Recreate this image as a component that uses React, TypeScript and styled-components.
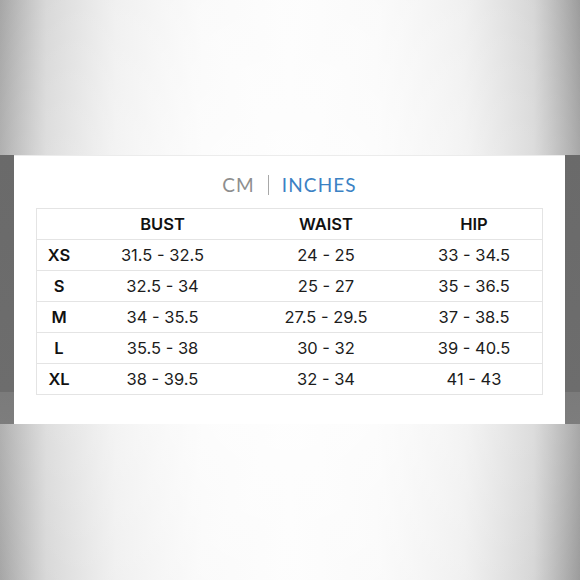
import * as React from "react"
import styled, {createGlobalStyle} from "styled-components";

const sizes = [
  {label: "XS", bust: "31.5 - 32.5", waist: "24 - 25", hip: "33 - 34.5"},
  {label: "S", bust: "32.5 - 34", waist: "25 - 27", hip: "35 - 36.5"},
  {label: "M", bust: "34 - 35.5", waist: "27.5 - 29.5", hip: "37 - 38.5"},
  {label: "L", bust: "35.5 - 38", waist: "30 - 32", hip: "39 - 40.5"},
  {label: "XL", bust: "38 - 39.5", waist: "32 - 34", hip: "41 - 43"},
]

const App = () => {
  return (
    <Page>
      <GlobalStyle/>
      <TopBand/>
      <Middle>
        <SideBar width={14}/>
        <Card>
          <Units>
            <Unit>CM</Unit>
            <Divider/>
            <Unit active>INCHES</Unit>
          </Units>
          <Table>
            <Row>
              <Cell/>
              <HeadCell>BUST</HeadCell>
              <HeadCell>WAIST</HeadCell>
              <HeadCell>HIP</HeadCell>
            </Row>
            {sizes.map(s => (
              <Row key={s.label}>
                <HeadCell>{s.label}</HeadCell>
                <Cell>{s.bust}</Cell>
                <Cell>{s.waist}</Cell>
                <Cell>{s.hip}</Cell>
              </Row>
            ))}
          </Table>
        </Card>
        <SideBar width={15}/>
      </Middle>
      <BottomBand/>
    </Page>
  );
};

const GlobalStyle = createGlobalStyle`
  body {
    margin: 0;
    font-family: Inter, "Liberation Sans", sans-serif;
  }
`

const Page = styled.div`
  width: 580px;
  height: 580px;
  display: flex;
  flex-direction: column;
  background:
    radial-gradient(ellipse 60% 90% at 50% 50%, rgba(255,255,255,0.9) 0%, rgba(255,255,255,0) 100%),
    linear-gradient(to right, #a6a6a6 0%, #d4d4d4 8%, #ececec 20%, #f8f8f8 35%, #fbfbfb 50%, #f8f8f8 65%, #ececec 80%, #d2d2d2 92%, #9c9c9c 100%);
  overflow: hidden;
`

const TopBand = styled.div`
  height: 155px;
  flex-shrink: 0;
`

const BottomBand = styled.div`
  flex: 1;
`

const Middle = styled.div`
  height: 269px;
  display: flex;
  flex-direction: row;
`

const SideBar = styled.div<{width: number}>`
  width: ${p => p.width}px;
  background: linear-gradient(#6a6a6a 0%, #6d6d6d 88%, #7b7b7b 88%, #7d7d7d 100%);
`

const Card = styled.div`
  flex: 1;
  background: #fff;
  border-top: 1px solid #ececec;
  display: flex;
  flex-direction: column;
  align-items: center;
  padding-top: 16px;
`

const Units = styled.div`
  display: flex;
  align-items: center;
  gap: 13px;
  height: 25px;
`

const Unit = styled.span<{active?: boolean}>`
  font-family: Lato, sans-serif;
  font-size: 19px;
  font-weight: 400;
  letter-spacing: 1.1px;
  color: ${p => p.active ? "#3b82c4" : "#8e8e8e"};
`

const Divider = styled.span`
  width: 1px;
  height: 20px;
  background: #a8a8a8;
`

const Table = styled.div`
  width: 505px;
  margin-top: 11px;
  border: 1px solid #e4e4e4;
`

const Row = styled.div`
  display: grid;
  grid-template-columns: 44px 163px 164px 1fr;
  height: 30px;
  padding-right: 2px;
  
  & + & {
    border-top: 1px solid #e4e4e4;
  }
`

const Cell = styled.div`
  display: flex;
  align-items: center;
  justify-content: center;
  font-size: 16.5px;
  color: #1c1c1c;
`

const HeadCell = styled(Cell)`
  font-weight: 600;
  font-size: 16.5px;
  color: #111;
`

export default App;
